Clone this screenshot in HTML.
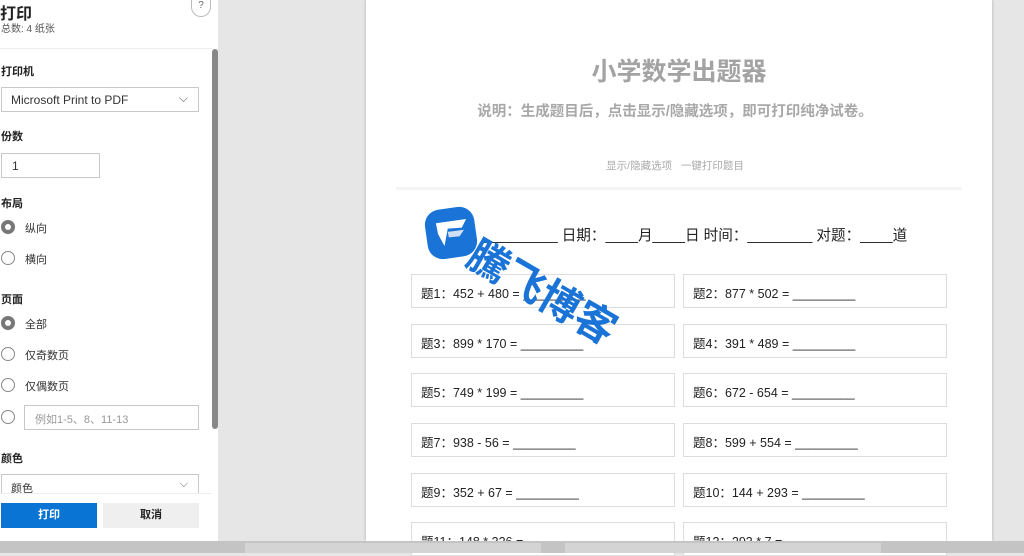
<!DOCTYPE html>
<html><head><meta charset="utf-8"><style>
*{margin:0;padding:0;box-sizing:border-box}
body{width:1024px;height:553px;overflow:hidden;background:#e6e6e6;font-family:"Liberation Sans","Noto Sans CJK SC",sans-serif;position:relative;color:#222}
.a{position:absolute}
.side{left:0;top:0;width:218px;height:541px;background:#fff}
.lbl{font-size:11px;font-weight:bold;color:#222;left:1px}
.box{border:1px solid #c8c8c8;background:#fff;font-size:12px;color:#333}
.radio{width:14px;height:14px;border-radius:50%;border:1px solid #888;left:1px;background:#fff}
.radio.on{border:4px solid #777}
.rt{font-size:11px;color:#333;left:25px}
.q{border:1px solid #ddd;width:264px;height:34px;font-size:12.5px;color:#222;padding:8px 0 0 9px;background:#fff}
</style></head><body>
<div class="a side"></div>
<div class="a" style="left:0;top:0;font-size:16px;font-weight:bold">打印</div>
<div class="a" style="left:1px;top:20px;font-size:10px;color:#555">总数: 4 纸张</div>
<div class="a" style="left:191px;top:0;width:20px;height:17px;border:1px solid #bbb;border-top:none;border-radius:0 0 10px 10px;font-size:10px;color:#666;text-align:center;line-height:12px">?</div>
<div class="a" style="left:0;top:48px;width:212px;border-top:1px solid #eee"></div>
<div class="a" style="left:212px;top:49px;width:6px;height:380px;background:#888;border-radius:3px"></div>
<div class="a lbl" style="top:63px">打印机</div>
<div class="a box" style="left:1px;top:87px;width:198px;height:25px;padding:5px 9px">Microsoft Print to PDF<span style="position:absolute;right:10px;top:3px;color:#666">⌵</span></div>
<div class="a lbl" style="top:128px">份数</div>
<div class="a box" style="left:1px;top:153px;width:99px;height:25px;padding:5px 10px">1</div>
<div class="a lbl" style="top:195px">布局</div>
<div class="a radio on" style="top:220px"></div><div class="a rt" style="top:220px">纵向</div>
<div class="a radio" style="top:251px"></div><div class="a rt" style="top:251px">横向</div>
<div class="a lbl" style="top:291px">页面</div>
<div class="a radio on" style="top:316px"></div><div class="a rt" style="top:316px">全部</div>
<div class="a radio" style="top:347px"></div><div class="a rt" style="top:347px">仅奇数页</div>
<div class="a radio" style="top:378px"></div><div class="a rt" style="top:378px">仅偶数页</div>
<div class="a radio" style="top:410px"></div>
<div class="a box" style="left:24px;top:405px;width:175px;height:25px;padding:5px 10px;font-size:11px;color:#999">例如1-5、8、11-13</div>
<div class="a lbl" style="top:450px">颜色</div>
<div class="a box" style="left:1px;top:474px;width:198px;height:25px;padding:5px 9px;font-size:11px">颜色<span style="position:absolute;right:10px;top:3px;color:#666">⌵</span></div>
<div class="a" style="left:0;top:493px;width:212px;height:48px;background:#fff;border-top:1px solid #eee"></div>
<div class="a" style="left:1px;top:503px;width:96px;height:25px;background:#0a74d4;color:#fff;font-size:11px;font-weight:bold;text-align:center;line-height:25px">打印</div>
<div class="a" style="left:103px;top:503px;width:96px;height:25px;background:#efefef;color:#222;font-size:11px;font-weight:bold;text-align:center;line-height:25px">取消</div>

<div class="a" style="left:366px;top:0;width:626px;height:541px;background:#fff;box-shadow:0 0 3px #aaa"></div>
<div class="a" style="left:366px;top:52px;width:626px;text-align:center;font-size:25px;font-weight:bold;color:#a3a3a3">小学数学出题器</div>
<div class="a" style="left:362px;top:100px;width:626px;text-align:center;font-size:14.5px;font-weight:bold;color:#a8a8a8">说明：生成题目后，点击显示/隐藏选项，即可打印纯净试卷。</div>
<div class="a" style="left:362px;top:158px;width:626px;text-align:center;font-size:10.5px;color:#aaa">显示/隐藏选项 &nbsp; 一键打印题目</div>
<div class="a" style="left:396px;top:187px;width:566px;height:3px;background:#f4f4f4"></div>
<div class="a" style="left:470px;top:224px;font-size:14.6px;color:#222;white-space:pre">：_________ 日期：____月____日 时间：________ 对题：____道</div>

<div class="a q" style="left:411px;top:274px">题1：452 + 480 = _________</div>
<div class="a q" style="left:683px;top:274px">题2：877 * 502 = _________</div>
<div class="a q" style="left:411px;top:324px">题3：899 * 170 = _________</div>
<div class="a q" style="left:683px;top:324px">题4：391 * 489 = _________</div>
<div class="a q" style="left:411px;top:373px">题5：749 * 199 = _________</div>
<div class="a q" style="left:683px;top:373px">题6：672 - 654 = _________</div>
<div class="a q" style="left:411px;top:423px">题7：938 - 56 = _________</div>
<div class="a q" style="left:683px;top:423px">题8：599 + 554 = _________</div>
<div class="a q" style="left:411px;top:473px">题9：352 + 67 = _________</div>
<div class="a q" style="left:683px;top:473px">题10：144 + 293 = _________</div>
<div class="a q" style="left:411px;top:522px">题11：148 * 326 = </div>
<div class="a q" style="left:683px;top:522px">题12：293 * 7 = </div>

<svg class="a" style="left:424px;top:206px" width="54" height="54" viewBox="0 0 50 50"><rect x="2" y="2" width="46" height="46" rx="14" fill="#1a73d6" transform="rotate(-8 25 25)"/><path d="M11 16 L39 12 L35 20 L22 21 L19 37 L13 26 Z" fill="#fff"/><path d="M22 24 L37 22 L33 28 L23 29 Z" fill="#cfe0f5"/></svg>
<div class="a" style="left:488px;top:222px;font-size:41px;font-weight:bold;color:#1a73d6;transform:rotate(30deg);transform-origin:left top;white-space:nowrap">騰飞博客</div>

<div class="a" style="left:0;top:541px;width:1024px;height:12px;background:#c4c4c4"></div>
<div class="a" style="left:245px;top:543px;width:296px;height:10px;background:#d4d4d4"></div>
<div class="a" style="left:565px;top:543px;width:316px;height:10px;background:#d4d4d4"></div>
</body></html>
